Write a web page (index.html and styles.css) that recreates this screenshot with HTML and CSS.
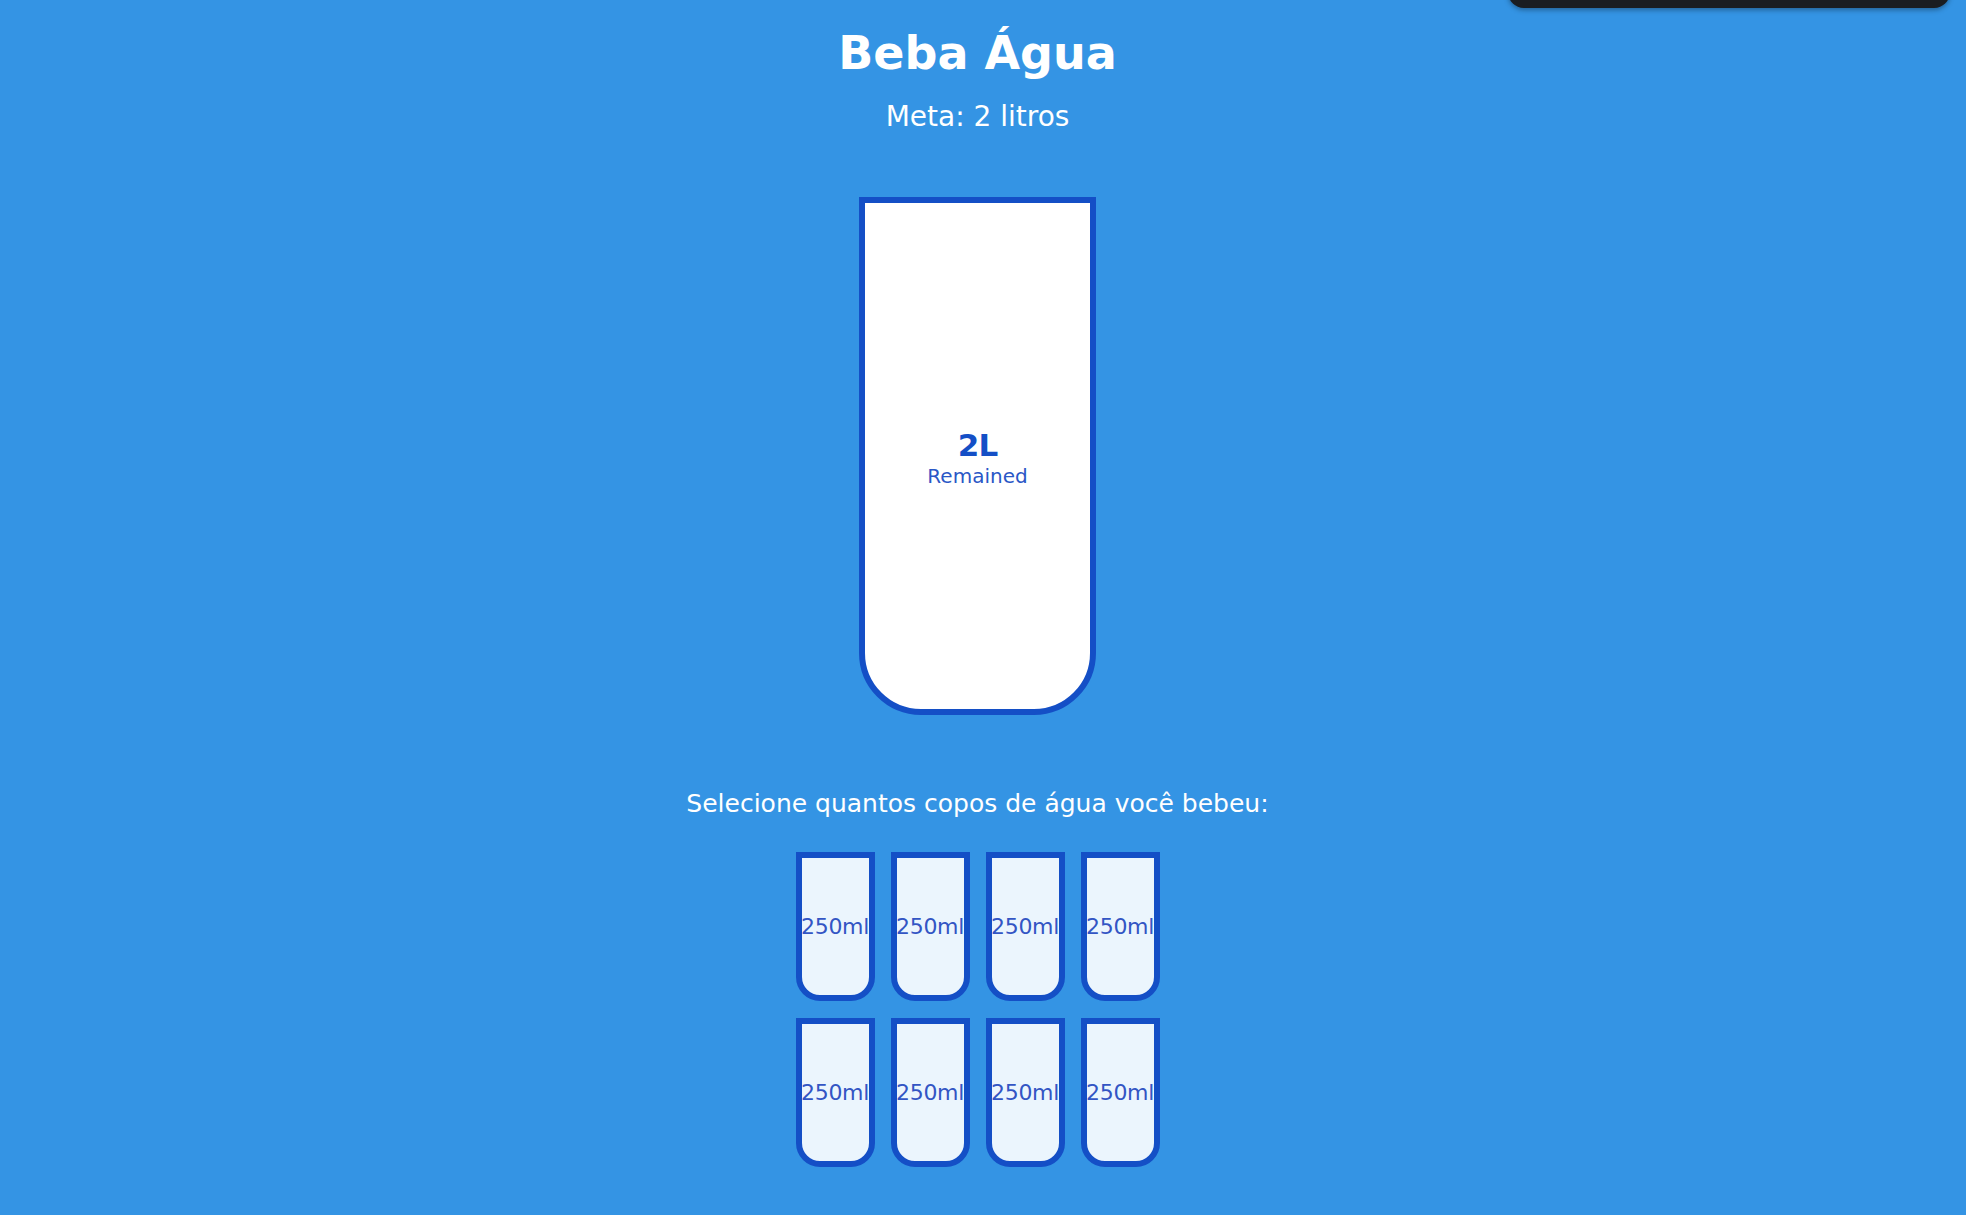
FILE: index.html
```html
<!DOCTYPE html>
<html lang="pt-BR">
<head>
<meta charset="UTF-8">
<title>Beba Água</title>
<link rel="stylesheet" href="styles.css">
</head>
<body>
  <div class="ext-bar"></div>
  <h1 class="title">Beba Água</h1>
  <h3 class="goal">Meta: 2 litros</h3>

  <div class="cup">
    <div class="remained">
      <span class="liters">2L</span>
      <small class="remained-label">Remained</small>
    </div>
  </div>

  <p class="text">Selecione quantos copos de água você bebeu:</p>

  <div class="cups">
    <div class="cup-small">250ml</div>
    <div class="cup-small">250ml</div>
    <div class="cup-small">250ml</div>
    <div class="cup-small">250ml</div>
    <div class="cup-small">250ml</div>
    <div class="cup-small">250ml</div>
    <div class="cup-small">250ml</div>
    <div class="cup-small">250ml</div>
  </div>
</body>
</html>
```

FILE: styles.css
```css
html, body {
  margin: 0;
  padding: 0;
}

body {
  background-color: #3494e4;
  color: #ffffff;
  font-family: "DejaVu Sans", "Noto Sans", sans-serif;
  display: flex;
  flex-direction: column;
  align-items: center;
  min-height: 1215px;
  padding-right: 11px;
  box-sizing: border-box;
  overflow: hidden;
}

.ext-bar {
  position: absolute;
  top: -20px;
  left: 1508px;
  width: 442px;
  height: 28px;
  background-color: #1a1d21;
  border-radius: 0 0 16px 16px;
  box-shadow: 0 2px 5px rgba(0, 0, 0, 0.35);
}

.title {
  font-size: 46px;
  line-height: 46px;
  font-weight: bold;
  margin: 30px 0 0;
}

.goal {
  font-size: 28px;
  line-height: 28px;
  font-weight: normal;
  margin: 27px 0 0;
}

.cup {
  box-sizing: border-box;
  width: 237px;
  height: 518px;
  margin-top: 66px;
  background-color: #ffffff;
  border: 6px solid #144fc6;
  border-radius: 0 0 62px 62px;
  color: #144fc6;
  display: flex;
  flex-direction: column;
  overflow: hidden;
}

.remained {
  flex: 1;
  display: flex;
  flex-direction: column;
  align-items: center;
  justify-content: center;
  text-align: center;
  padding-top: 5px;
}

.liters {
  font-size: 31px;
  line-height: 32px;
  font-weight: bold;
  letter-spacing: -1px;
}

.remained-label {
  font-size: 20px;
  line-height: 24px;
  margin-top: 3px;
  color: #2a57c6;
}

.text {
  font-size: 25px;
  line-height: 28px;
  margin: 75px 0 0;
}

.cups {
  display: flex;
  flex-wrap: wrap;
  justify-content: center;
  width: 380px;
  margin-top: 34px;
  column-gap: 16px;
  row-gap: 17px;
}

.cup-small {
  box-sizing: border-box;
  width: 79px;
  height: 149px;
  background-color: rgba(255, 255, 255, 0.9);
  border: 6px solid #144fc6;
  border-radius: 0 0 24px 24px;
  color: #3355c4;
  font-size: 22px;
  letter-spacing: -0.3px;
  display: flex;
  align-items: center;
  justify-content: center;
  text-align: center;
  white-space: nowrap;
  overflow: visible;
  cursor: pointer;
}
```
